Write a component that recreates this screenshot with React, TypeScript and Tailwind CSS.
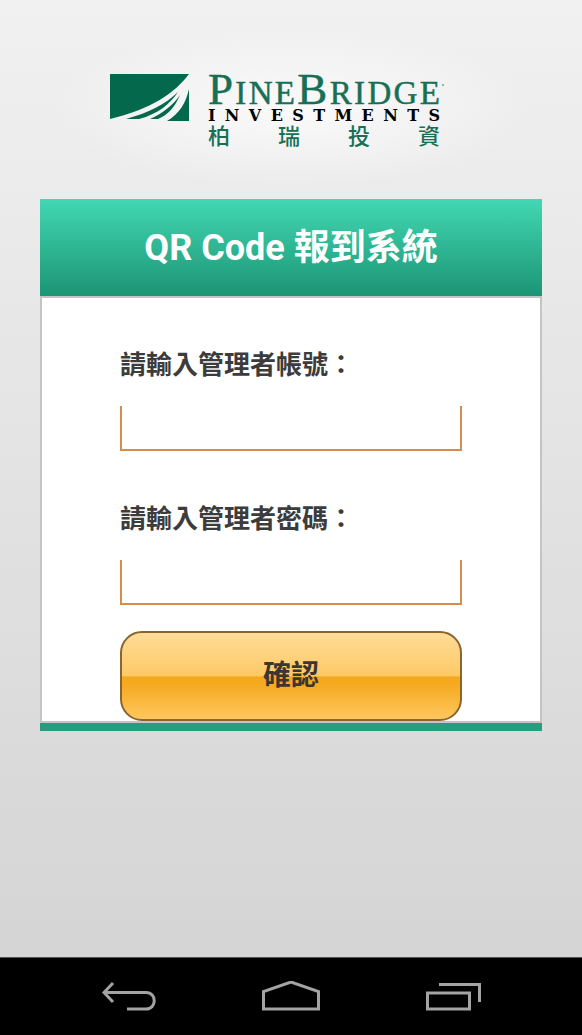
const brand = [
  { letter: "P", big: true },
  { letter: "I" },
  { letter: "N" },
  { letter: "E" },
  { letter: "B", big: true },
  { letter: "R" },
  { letter: "I" },
  { letter: "D" },
  { letter: "G" },
  { letter: "E" },
];

const fields = [
  { id: "account", label: "請輸入管理者帳號：", type: "text" },
  { id: "password", label: "請輸入管理者密碼：", type: "password" },
];

function Logo() {
  return (
    <div className="flex items-start gap-[19px] text-[#177055]">
      <svg viewBox="0 0 79 47" className="w-[79px] h-[47px]" aria-hidden="true">
        <path d="M0 0H79C65 19 41 35 0 45Z" fill="#04694c" />
        <path d="M16 45C38 39 56 30 68 18C60 30 48 40 29 45Z" fill="#04694c" />
        <path d="M40 45C53 39 63 31 70 21C65 33 58 41 48 45Z" fill="#04694c" />
        <path d="M79 15V47H57C69 40 76 29 79 15Z" fill="#04694c" />
      </svg>
      <div className="relative w-[232px]">
        <div className="flex items-baseline justify-between h-[34px] leading-[30px] font-['Liberation_Serif',serif] [-webkit-text-stroke:0.5px]">
          {brand.map((item, index) => (
            <span key={index} className={item.big ? "text-[45px]" : "text-[33px]"}>
              {item.letter}
            </span>
          ))}
        </div>
        <i className="absolute -right-1 top-2.5 size-0.5 rounded-full bg-[#6fa593]" />
        <div className="flex justify-between h-4 text-[16px] leading-4 font-bold text-black font-['DejaVu_Serif',serif]">
          {[..."INVESTMENTS"].map((letter, index) => (
            <span key={index}>{letter}</span>
          ))}
        </div>
        <div className="flex justify-between text-[22px] leading-5 font-medium font-['Noto_Sans_CJK_TC',sans-serif]">
          {[..."柏瑞投資"].map((letter) => (
            <span key={letter}>{letter}</span>
          ))}
        </div>
      </div>
    </div>
  );
}

function NavBar() {
  const button = "flex-1 flex items-center justify-center";
  return (
    <nav className="flex h-[78px] px-12 bg-black border-t border-[#555] text-[#a3a3a3]">
      <button type="button" aria-label="Back" className={button}>
        <svg viewBox="0 0 56 32" className="w-14 h-8" fill="none" stroke="currentColor" strokeWidth="3">
          <path d="M12 2L3 11.500L12 21M3 11.500H45C56 11.500 56 28 45 28H26" />
        </svg>
      </button>
      <button type="button" aria-label="Home" className={button}>
        <svg viewBox="0 0 60 32" className="w-[60px] h-8" fill="none" stroke="currentColor" strokeWidth="3">
          <path d="M2.500 28V10.500L30 1L57.500 10.500V28Z" />
        </svg>
      </button>
      <button type="button" aria-label="Recent apps" className={button}>
        <svg viewBox="0 0 56 32" className="w-14 h-8" fill="none" stroke="currentColor" strokeWidth="3">
          <path d="M2.500 12H44.500V28H2.500Z M14 3.500H54.500V21" />
        </svg>
      </button>
    </nav>
  );
}

export default function App() {
  return (
    <div className="flex flex-col min-h-screen bg-linear-to-b from-[#f1f1f1] to-[#d2d2d2] font-[Roboto,'Noto_Sans_CJK_TC',sans-serif]">
      <header className="flex justify-center h-[199px] pt-[74px] pr-8 bg-[radial-gradient(ellipse_240px_80px_at_50%_108px,#fafafa,transparent)]">
        <Logo />
      </header>
      <main className="flex-1 px-10">
        <form className="border-b-8 border-[#279d80]">
          <h1 className="h-[97px] leading-[98px] text-center text-[36px] font-bold text-white bg-linear-to-b from-[#42d8b3] to-[#1b9575]">
            QR Code 報到系統
          </h1>
          <div className="px-[78px] pt-12 border-2 border-[#c4c4c4] bg-white">
            {fields.map((field) => (
              <div key={field.id} className="mb-[49px] last-of-type:mb-[26px]">
                <label htmlFor={field.id} className="block mb-[22px] text-[26px] leading-[38px] font-bold text-[#3c3c3c]">
                  {field.label}
                </label>
                <input
                  id={field.id}
                  type={field.type}
                  className="block w-full h-[45px] px-2 text-2xl border-2 border-t-0 border-[#d58d4e] outline-none"
                />
              </div>
            ))}
            <button
              type="submit"
              className="block w-full h-[90px] rounded-[22px] border-2 border-[#8a6530] text-[28px] font-bold text-[#3c3633] bg-[linear-gradient(#ffdc98,#fdc966_50%,#f5a81c_51%,#f5aa20_60%,#ffc75f)]"
            >
              確認
            </button>
          </div>
        </form>
      </main>
      <NavBar />
    </div>
  );
}
